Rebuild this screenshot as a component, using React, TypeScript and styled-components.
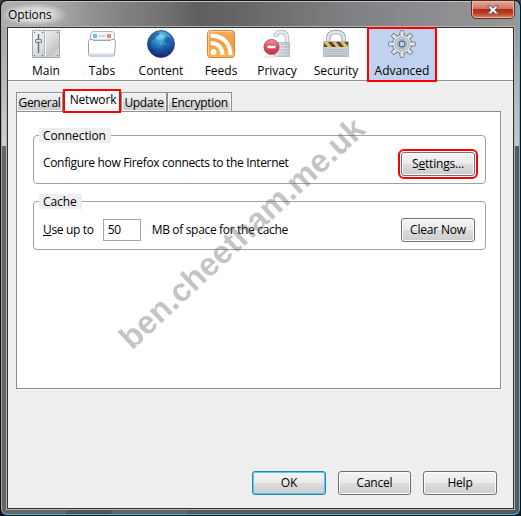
import React from "react";
import styled, { createGlobalStyle, css } from "styled-components";

const Global = createGlobalStyle`
  * { box-sizing: border-box; }
  html, body { margin: 0; padding: 0; }
  body { width: 521px; height: 516px; overflow: hidden; background: #444; }
  button, input { font: inherit; letter-spacing: inherit; color: inherit; padding: 0; margin: 0; }
`;

const Glass = styled.div`
  position: relative;
  width: 521px;
  height: 516px;
  padding: 1px;
  background: #101314;
  font: 12px/16px "Open Sans", "Noto Sans", sans-serif;
  letter-spacing: -0.33px;
  color: #000;
  border-radius: 6px 6px 0 0;
`;

const Frame = styled.div`
  width: 519px;
  height: 514px;
  padding: 1px 5px 5px;
  border: 1px solid;
  border-color: #c4c4c4 #35c4e8 #2cc3ee #a9a9a9;
  border-radius: 6px;
  background:
    linear-gradient(#a6a6a6, #b6b6b6 40%, #d4d0d0) 0 24px / 6px 120px no-repeat,
    linear-gradient(#979797, #adafb0 40%, #c6c8c9) 100% 24px / 6px 120px no-repeat,
    linear-gradient(90deg, #aeaeae 0, #a8a8a8 55px, #939393 85px, #828282 120px, #757575 155px, #5f5f5f 195px, #666 240px, #747576 300px, #808184 350px, #8b8c8f 420px, #979797 519px) 0 0 / 100% 26px no-repeat,
    linear-gradient(115deg, #666 0 40%, #555 40% 46%, #646464 46% 56%, #595959 56%);
`;

const TitleBar = styled.header`
  display: flex;
  justify-content: space-between;
  align-items: flex-start;
  height: 24px;
`;

const Title = styled.span`
  margin-left: -5px;
  padding: 0 16px 0 6px;
  background: radial-gradient(closest-side, rgba(255, 255, 255, 0.65), rgba(255, 255, 255, 0.5) 55%, transparent);
  line-height: 23px;
  letter-spacing: -0.1px;
  text-shadow: 0 0 5px #fff;
`;

const Close = styled.button`
  display: flex;
  align-items: center;
  justify-content: center;
  width: 42px;
  height: 17px;
  margin-top: -2px;
  border: 1px solid #f0b5a7;
  border-radius: 0 0 4px 4px;
  outline: 1px solid #4d3430;
  background: linear-gradient(#e5a494 0%, #cf7561 44%, #ad2d16 48%, #bd3c22 75%, #db7457 100%);
`;

const Client = styled.main`
  display: flex;
  flex-direction: column;
  width: 507px;
  height: 482px;
  border: 1px solid #303030;
  outline: 1px solid #b5b5b5;
  background: #eee;
`;

const Toolbar = styled.nav`
  display: flex;
  flex: none;
  height: 53px;
  padding-left: 10px;
  background: #fff;
  border-bottom: 1px solid #909090;
  box-shadow: 0 1px #fafafa;
`;

const Category = styled.button<{ $width: number; $active?: boolean }>`
  display: flex;
  flex: none;
  flex-direction: column;
  align-items: center;
  width: ${(p) => p.$width}px;
  height: 54px;
  padding-top: 1px;
  border: 0;
  background: transparent;
  letter-spacing: 0;
  svg { display: block; margin-bottom: 4px; }
  ${(p) => p.$active && css`
    height: 55px;
    margin: -1px 0 0 -1px;
    padding-top: 0;
    border: 2px solid #f00;
    background: #c1d2ee;
    z-index: 1;
  `}
`;

const Tabs = styled.div`
  display: flex;
  align-items: flex-end;
  flex: none;
  height: 30px;
  margin: 0 11px 0 8px;
  position: relative;
  z-index: 1;
`;

const Tab = styled.button<{ $width: number; $active?: boolean }>`
  flex: none;
  width: ${(p) => p.$width}px;
  height: 20px;
  margin-bottom: -1px;
  border: 1px solid #8d8e93;
  box-shadow: inset 0 0 0 1px #f8f8f8;
  background: linear-gradient(#f1f1f1, #e7e7e7 48%, #d8d8d8 50%, #cbcbcb);
  line-height: 17px;
  text-align: center;
  white-space: nowrap;
  ${(p) => p.$active && css`
    height: 24px;
    margin-bottom: -2px;
    padding: 0 0 3px 2px;
    border: 2px solid #f00;
    box-shadow: none;
    background: #fff;
    letter-spacing: -0.15px;
  `}
`;

const Panel = styled.section`
  display: flex;
  flex-direction: column;
  gap: 10px;
  flex: none;
  width: 485px;
  height: 278px;
  margin-left: 8px;
  padding: 16px 14px 0 16px;
  border: 1px solid #8a8a94;
  box-shadow: 1px 1px #fafafa;
  background: #fff;
`;

const Group = styled.fieldset`
  width: 453px;
  height: 56px;
  min-width: 0;
  margin: 0;
  padding: 0;
  border: 1px solid #a0a0a0;
  border-radius: 4px;
`;

const Legend = styled.legend`
  height: 15px;
  margin-left: 5px;
  padding: 0 5px 0 4px;
  background: #eee;
  line-height: 15px;
  letter-spacing: -0.1px;
`;

const Row = styled.div`
  display: flex;
  align-items: center;
  height: 24px;
  margin-top: 9px;
  padding: 0 10px 0 9px;
  white-space: nowrap;
`;

const Caption = styled.span`
  padding-bottom: 2px;
`;

const Amount = styled.input`
  width: 38px;
  height: 22px;
  margin: 0 11px 0 9px;
  padding: 0 0 1px 4px;
  border: 1px solid #a5a5a5;
  border-radius: 0;
  background: #fff;
`;

const Push = styled.button<{ $width?: number; $ring?: boolean; $focus?: boolean }>`
  flex: none;
  width: ${(p) => p.$width ?? 74}px;
  height: 24px;
  padding-bottom: 1px;
  border: 1px solid ${(p) => (p.$focus ? "#347eac" : "#707070")};
  border-radius: 3px;
  box-shadow: inset 0 0 0 1px ${(p) => (p.$focus ? "#45d2fa" : "#fbfbfb")};
  background: linear-gradient(#f3f3f3, #ebebeb 48%, #dcdcdc 50%, #cdcdcd);
  letter-spacing: -0.2px;
  ${(p) => p.$ring && css`
    outline: 2px solid #f00;
    outline-offset: 1px;
  `}
`;

const PushRight = styled(Push)`
  margin-left: auto;
`;

const Actions = styled.footer`
  display: flex;
  justify-content: flex-end;
  gap: 12px;
  margin-top: auto;
  padding: 0 16px 13px 0;
`;

const Watermark = styled.div`
  position: absolute;
  left: 242px;
  top: 233px;
  width: 0;
  height: 0;
  display: flex;
  align-items: center;
  justify-content: center;
  transform: rotate(-43deg);
  color: rgba(100, 100, 100, 0.38);
  font: bold 32.5px/1 "Liberation Sans", sans-serif;
  letter-spacing: 0;
  white-space: nowrap;
  pointer-events: none;
`;

const MainIcon = () => (
  <svg width="30" height="30" viewBox="0 0 30 30">
    <defs><linearGradient id="panel" x2="1" y2="1"><stop stopColor="#f4f5f6" /><stop offset=".5" stopColor="#dcdddf" /><stop offset=".75" stopColor="#c4c6c8" /><stop offset="1" stopColor="#dcdddf" /></linearGradient></defs>
    <path d="M1.500 1.500h27v27h-27z" fill="url(#panel)" stroke="#a3a8ac" />
    <path d="M13.500 2v26" stroke="#b4b7ba" />
    <path d="M14.500 2v26" stroke="#fff" />
    <path d="M3 3.500h1M11 3.500h1M26 3.500h1M3 26.500h1M11 26.500h1M26 26.500h1" stroke="#555" />
    <path d="M7.500 5v19" stroke="#526b7b" strokeWidth="1.300" />
    <rect x="4.500" y="10.500" width="6" height="3" rx=".5" fill="#d5dce3" stroke="#6f8496" />
  </svg>
);

const TabsIcon = () => (
  <svg width="30" height="30" viewBox="0 0 30 30">
    <path d="M3.500 11V5l2-2.500h20l2 2.500v6z" fill="#f6f6f4" stroke="#b4b6b8" />
    <path d="M1.500 12.500l1-2h3l1 1h17l1-1h3l1 2-1 13-1 1.500h-24l-1-1.500z" fill="#fff" stroke="#95a3b5" />
    <path d="M3 24h24v2H3z" fill="#dfe5ec" />
    <rect x="6" y="5" width="4" height="4" fill="#6cc3e4" />
    <path d="M11.500 7h7" stroke="#a9adb0" /><rect x="20" y="5" width="4" height="4" fill="#dc8f89" />
  </svg>
);

const ContentIcon = () => (
  <svg width="30" height="30" viewBox="0 0 30 30">
    <defs><radialGradient id="globe" cx=".5" cy=".2" r=".82"><stop stopColor="#6bcbea" /><stop offset=".35" stopColor="#2f8fc8" /><stop offset=".7" stopColor="#174c98" /><stop offset="1" stopColor="#1d176d" /></radialGradient></defs>
    <circle cx="15" cy="15" r="13.500" fill="url(#globe)" stroke="#2a3f78" strokeWidth=".8" />
    <path d="M4 9l3-4 4-2 3 1-2 3-3 1 1 2-4 1-1 4-2-2zM19 9l3-2 3 3 1 5-3-1-3 1-2-3zM17 17l4-1 4 2-4 7-3 1-1-4zM5 19l4 1 2 3-2 2-3-3z" fill="#174a90" opacity=".55" />
    <path d="M11 7l4-2 4 2-2 3-4 1-3-1zM21 5l3 3-3-1zM13 13l3 1-1 2z" fill="#8bd9ee" opacity=".45" />
  </svg>
);

const FeedsIcon = () => (
  <svg width="30" height="30" viewBox="0 0 30 30">
    <defs><linearGradient id="feed" x2="0" y2="1"><stop stopColor="#f3ae66" /><stop offset=".5" stopColor="#f59b35" /><stop offset="1" stopColor="#ffb94e" /></linearGradient></defs>
    <rect x="1.500" y="1.500" width="27" height="27" rx="3" fill="url(#feed)" stroke="#d8853f" />
    <path d="M2.500 26V4q0-1.500 1.500-1.500h22" fill="none" stroke="#ffcf9a" />
    <circle cx="7.500" cy="23" r="3" fill="#fff" />
    <path d="M4.500 14Q16 14.500 16.500 26M4.500 6.500Q24 7.500 24.500 26" fill="none" stroke="#fff" strokeWidth="4" />
  </svg>
);

const PrivacyIcon = () => (
  <svg width="30" height="30" viewBox="0 0 30 30">
    <defs><linearGradient id="lock"><stop stopColor="#dce1e4" /><stop offset="1" stopColor="#b4bcc1" /></linearGradient><linearGradient id="stop" x2="0" y2="1"><stop stopColor="#ef9a9b" /><stop offset=".5" stopColor="#d85061" /><stop offset="1" stopColor="#cf3042" /></linearGradient></defs>
    <path d="M25 13V9q0-6-6-6-4.500 0-5.500 5" fill="none" stroke="#b4bbc0" strokeWidth="4.500" />
    <path d="M25 13V9q0-6-6-6-4.500 0-5.500 4.500" fill="none" stroke="#e9ecee" strokeWidth="2.600" />
    <path d="M12.500 13.500h15v14h-15z" fill="url(#lock)" stroke="#b9c1c6" />
    <path d="M14 16.500h13M14 19.500h13M14 22.500h13M14 25.500h13" stroke="#d3d9dc" />
    <ellipse cx="8" cy="28" rx="7" ry="1" fill="#e9e9e9" />
    <circle cx="9.500" cy="18" r="7.500" fill="url(#stop)" stroke="#b54b56" />
    <path d="M5.500 18h8" stroke="#fff" strokeWidth="2.500" />
  </svg>
);

const SecurityIcon = () => (
  <svg width="30" height="30" viewBox="0 0 30 30">
    <path d="M7 13v-2.500q0-7.500 8-7.500t8 7.500V13" fill="none" stroke="#a0a7aa" strokeWidth="4.500" />
    <path d="M7 13v-2.500q0-7.500 8-7.500t8 7.500V13" fill="none" stroke="#e3e6e8" strokeWidth="2.500" />
    <path d="M2.500 12.500h25v15h-25z" fill="#ccd2d5" stroke="#b4b9bc" />
    <path d="M4 20.500h22M4 22.500h22M4 24.500h22M4 26.500h22" stroke="#a9b3bb" strokeWidth=".8" />
    <path d="M3 13h24v5H3z" fill="#eebb4a" />
    <path d="M3 14l4 4H3zM7 13h4l4 5h-4zM15 13h4l4 5h-4zM23 13h4v4z" fill="#484a48" />
  </svg>
);

const teeth = [0, 45, 90, 135, 180, 225, 270, 315];
const AdvancedIcon = () => (
  <svg width="30" height="30" viewBox="0 0 30 30">
    <g fill="#e4e5e4" stroke="#677f94">
      {teeth.map((a) => <path key={a} d="M12.700 6l.6-4.300h3.400l.6 4.300z" transform={"rotate(" + a + " 15 15)"} />)}
      <circle cx="15" cy="15" r="9.500" />
    </g>
    <g fill="#e4e4e3">{teeth.map((a) => <path key={a} d="M13.700 7V2.300h2.600V7z" transform={"rotate(" + a + " 15 15)"} />)}</g>
    <circle cx="15" cy="15" r="7" fill="none" stroke="#b7babb" strokeWidth="1.500" />
    <circle cx="15" cy="15" r="5" fill="#dfe1e2" stroke="#8a9daf" />
    <circle cx="15" cy="15" r="3" fill="#c1d2ee" stroke="#4b7394" strokeWidth="1.300" />
  </svg>
);

const categories = [
  { name: "Main", width: 56, Icon: MainIcon },
  { name: "Tabs", width: 56, Icon: TabsIcon },
  { name: "Content", width: 62, Icon: ContentIcon },
  { name: "Feeds", width: 58, Icon: FeedsIcon },
  { name: "Privacy", width: 54, Icon: PrivacyIcon },
  { name: "Security", width: 64, Icon: SecurityIcon },
  { name: "Advanced", width: 70, Icon: AdvancedIcon },
];

export default function App() {
  return (
    <>
      <Global />
      <Glass>
        <Frame>
          <TitleBar>
            <Title>Options</Title>
            <Close aria-label="Close">
              <svg width="14" height="10" viewBox="0 0 14 10"><path d="M1.500 1h3L7 3.200 9.500 1h3L9 5l3.500 4h-3L7 6.800 4.500 9h-3L5 5z" fill="#fff" stroke="#555c6b" /></svg>
            </Close>
          </TitleBar>
          <Client>
            <Toolbar>
              {categories.map(({ name, width, Icon }) => (
                <Category key={name} $width={width} $active={name === "Advanced"}><Icon />{name}</Category>
              ))}
            </Toolbar>
            <Tabs>
              <Tab $width={47}>General</Tab>
              <Tab $width={58} $active>Network</Tab>
              <Tab $width={46}>Update</Tab>
              <Tab $width={65}>Encryption</Tab>
            </Tabs>
            <Panel>
              <Group>
                <Legend>Connection</Legend>
                <Row><Caption>Configure how Firefox connects to the Internet</Caption><PushRight $ring>S<u>e</u>ttings...</PushRight></Row>
              </Group>
              <Group>
                <Legend>Cache</Legend>
                <Row><span><u>U</u>se up to</span><Amount defaultValue="50" />MB of space for the cache<PushRight>Clear Now</PushRight></Row>
              </Group>
            </Panel>
            <Actions>
              <Push $focus>OK</Push>
              <Push $width={73}>Cancel</Push>
              <Push>Help</Push>
            </Actions>
          </Client>
        </Frame>
        <Watermark>ben.cheetham.me.uk</Watermark>
      </Glass>
    </>
  );
}
